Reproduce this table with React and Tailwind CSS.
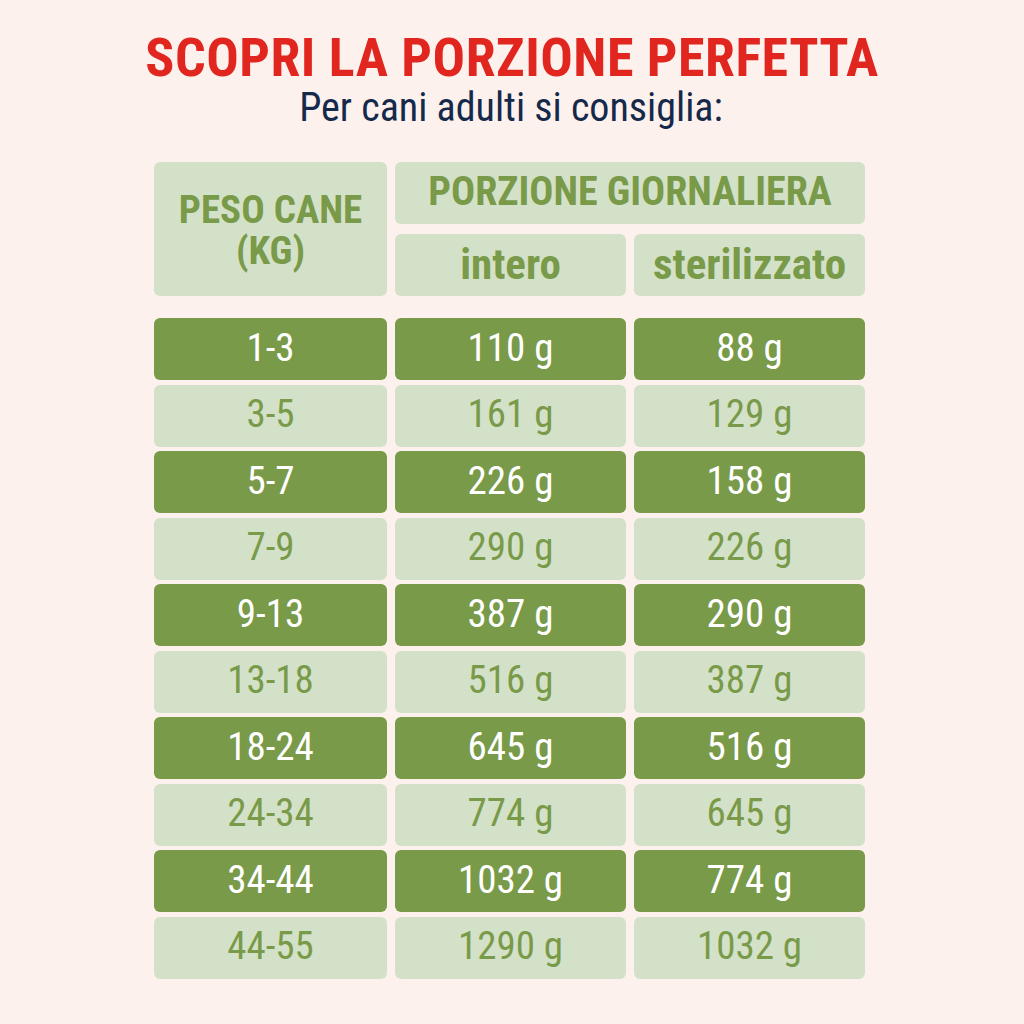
import React from 'react';

const rows = [
  ['1-3', '110 g', '88 g'],
  ['3-5', '161 g', '129 g'],
  ['5-7', '226 g', '158 g'],
  ['7-9', '290 g', '226 g'],
  ['9-13', '387 g', '290 g'],
  ['13-18', '516 g', '387 g'],
  ['18-24', '645 g', '516 g'],
  ['24-34', '774 g', '645 g'],
  ['34-44', '1032 g', '774 g'],
  ['44-55', '1290 g', '1032 g']
];

const cond = { fontFamily: '"Roboto Condensed", "Liberation Sans Narrow", "DejaVu Sans Condensed", Roboto, sans-serif' };

export default function App() {
  return (
    <div className="w-[1024px] h-[1024px] bg-[#fdf1ee] flex flex-col items-center pt-[32px]" style={cond}>
      <h1 className="text-[54px] leading-[52px] font-bold text-[#e0261e] tracking-[0.5px]">SCOPRI LA PORZIONE PERFETTA</h1>
      <p className="text-[40px] leading-[40px] text-[#15294a] mt-[4px] ml-[-2px]">Per cani adulti si consiglia:</p>

      <div className="w-[711px] mt-[34px] ml-[-5px]">
        <div className="grid grid-cols-[233px_1fr] gap-x-[8px] h-[134px]">
          <div className="bg-[#d4e1c9] rounded-[6px] flex flex-col items-center justify-center text-center text-[39px] leading-[41px] font-bold text-[#799a48] pt-[4px]">
            <span>PESO CANE</span>
            <span>(KG)</span>
          </div>
          <div className="grid grid-rows-[62px_62px] gap-y-[10px]">
            <div className="bg-[#d4e1c9] rounded-[6px] flex items-center justify-center text-[40px] leading-none font-bold text-[#799a48] pb-[2px]">
              PORZIONE GIORNALIERA
            </div>
            <div className="grid grid-cols-2 gap-x-[8px]">
              <div className="bg-[#d4e1c9] rounded-[6px] flex items-center justify-center text-[43px] leading-none font-bold text-[#799a48] pb-[2px]">intero</div>
              <div className="bg-[#d4e1c9] rounded-[6px] flex items-center justify-center text-[43px] leading-none font-bold text-[#799a48] pb-[2px]">sterilizzato</div>
            </div>
          </div>
        </div>

        <div className="mt-[22px] flex flex-col gap-y-[4.5px]">
          {rows.map((r, i) => {
            const dark = i % 2 === 0;
            return (
              <div key={r[0]} className="grid grid-cols-[233px_1fr_1fr] gap-x-[8px] h-[62px]">
                {r.map((c, j) => (
                  <div
                    key={j}
                    className={
                      dark
                        ? 'bg-[#799a48] text-white rounded-[6px] flex items-center justify-center text-[39px] leading-none pb-[2px]'
                        : 'bg-[#d4e1c9] text-[#799a48] rounded-[6px] flex items-center justify-center text-[39px] leading-none pb-[2px]'
                    }
                  >
                    {c}
                  </div>
                ))}
              </div>
            );
          })}
        </div>
      </div>
    </div>
  );
}
